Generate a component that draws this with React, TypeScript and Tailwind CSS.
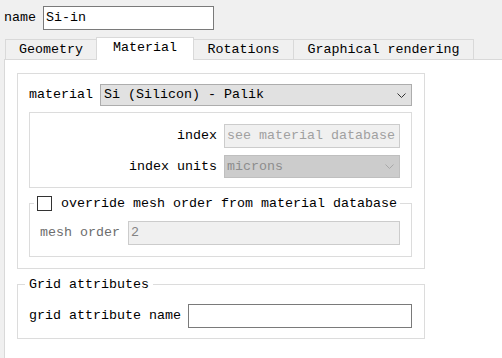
import React from "react";

function Chevron({ color }: { color: string }) {
  return (
    <svg width="9" height="5" viewBox="0 0 9 5" className="shrink-0">
      <path d="M0.5 0.5 L4.5 4.5 L8.5 0.5" fill="none" stroke={color} strokeWidth="1" />
    </svg>
  );
}

const tabs = [
  { label: "Geometry", cls: "w-[91px] border-l" },
  { label: "Material", cls: "w-[98px] border-l border-r", active: true },
  { label: "Rotations", cls: "w-[100px] border-r" },
  { label: "Graphical rendering", cls: "w-[180px] border-r" },
];

export default function App() {
  return (
    <div className="w-[502px] h-[358px] overflow-hidden bg-[#f0f0f0] flex flex-col font-['Liberation_Mono',monospace] text-[13.33px] leading-none text-black">
      {/* name row */}
      <div className="flex items-center pt-[6px] pl-[4px] gap-[7px]">
        <span>name</span>
        <div className="w-[171px] h-[24px] bg-white border border-[#7a7a7a] flex items-center px-[2px]">
          Si-in
        </div>
      </div>

      {/* tabs */}
      <div className="mt-[7px] h-[22px] flex items-end pl-[5px] relative z-10">
        {tabs.map((t) =>
          t.active ? (
            <div
              key={t.label}
              className={`${t.cls} h-[23px] -mb-px bg-white border-t border-[#d9d9d9] flex items-center justify-center pb-[2px]`}
            >
              {t.label}
            </div>
          ) : (
            <div
              key={t.label}
              className={`${t.cls} h-[20px] border-t border-[#d9d9d9] flex items-center justify-center`}
            >
              {t.label}
            </div>
          )
        )}
      </div>

      {/* panel */}
      <div className="flex-1 ml-[4px] bg-white border-l border-t border-[#d9d9d9] flex flex-col">
        <div className="ml-[12px] mt-[13px] w-[408px] h-[196px] border border-[#dcdcdc] flex flex-col pl-[11px] pt-[10px]">
          <div className="flex items-center gap-[7px]">
            <span>material</span>
            <div className="w-[312px] h-[22px] bg-[#e1e1e1] border border-[#adadad] flex items-center justify-between pl-[3px] pr-[5px]">
              <span>Si (Silicon) - Palik</span>
              <Chevron color="#333" />
            </div>
          </div>

          <div className="mt-[6px] w-[383px] h-[76px] border border-[#dcdcdc] flex flex-col items-end pr-[11px] pt-[11px] gap-[7px]">
            <div className="flex items-center gap-[7px]">
              <span>index</span>
              <div className="w-[176px] h-[24px] bg-[#f0f0f0] border border-[#cccccc] flex items-center px-[2px] text-[#a0a0a0]">
                see material database
              </div>
            </div>
            <div className="flex items-center gap-[7px]">
              <span>index units</span>
              <div className="w-[176px] h-[23px] bg-[#cccccc] border border-[#bfbfbf] flex items-center justify-between pl-[2px] pr-[5px] text-[#8c8c8c]">
                <span>microns</span>
                <Chevron color="#a8a8a8" />
              </div>
            </div>
          </div>

          <fieldset className="mt-[8px] w-[383px] h-[61px] border border-[#dcdcdc] pl-[4px]">
            <legend className="px-[3px] flex items-center gap-[9px]">
              <span className="w-[15px] h-[15px] border border-[#333333] bg-white inline-block" />
              <span>override mesh order from material database</span>
            </legend>
            <div className="flex items-center gap-[8px] pl-[6px] mt-[10px]">
              <span className="text-[#6d6d6d]">mesh order</span>
              <div className="w-[272px] h-[24px] bg-[#f0f0f0] border border-[#cccccc] flex items-center px-[2px] text-[#838383]">
                2
              </div>
            </div>
          </fieldset>
        </div>

        <fieldset className="ml-[12px] mt-[8px] w-[408px] h-[62px] border border-[#dcdcdc] pl-[7px]">
          <legend className="px-[4px] h-[15px] flex items-center">Grid attributes</legend>
          <div className="flex items-center gap-[7px] pl-[4px] mt-[12px]">
            <span>grid attribute name</span>
            <div className="w-[224px] h-[24px] bg-white border border-[#7a7a7a]" />
          </div>
        </fieldset>
      </div>
    </div>
  );
}
